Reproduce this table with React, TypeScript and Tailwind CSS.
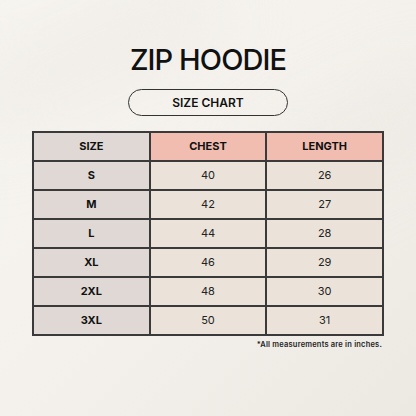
const rows = [
  { size: 'S', chest: 40, length: 26 },
  { size: 'M', chest: 42, length: 27 },
  { size: 'L', chest: 44, length: 28 },
  { size: 'XL', chest: 46, length: 29 },
  { size: '2XL', chest: 48, length: 30 },
  { size: '3XL', chest: 50, length: 31 },
]

export default function App() {
  return (
    <div
      className="relative w-[416px] h-[416px] overflow-hidden bg-gradient-to-br from-[#f7f5f0] via-[#f4f1ec] to-[#ece8e2] text-[#111]"
      style={{ fontFamily: 'Inter, "Liberation Sans", sans-serif' }}
    >
      {/* soft window-light shading */}
      <div className="absolute -left-10 top-6 w-[260px] h-[60px] rotate-[-25deg] bg-[#e9e5df]/60 blur-2xl" />
      <div className="absolute right-[-40px] top-[110px] w-[200px] h-[50px] rotate-[-25deg] bg-[#e6e2dc]/50 blur-2xl" />

      <div className="relative flex flex-col items-center pt-[45px]">
        <h1 className="text-[29px] leading-none font-medium tracking-[-0.9px]">ZIP HOODIE</h1>

        <div className="mt-[15px] w-[160px] h-[27px] rounded-full border border-[#333] flex items-center justify-center">
          <span className="text-[12px] font-semibold">SIZE CHART</span>
        </div>

        <table className="mt-[15px] w-[352px] table-fixed border-collapse text-[11px]">
          <thead>
            <tr className="h-[29px]">
              <th className="border-2 border-[#3a3a3a] bg-[#dfd8d4] font-bold">SIZE</th>
              <th className="border-2 border-[#3a3a3a] bg-[#f0bdb0] font-bold">CHEST</th>
              <th className="border-2 border-[#3a3a3a] bg-[#f0bdb0] font-bold">LENGTH</th>
            </tr>
          </thead>
          <tbody>
            {rows.map((r) => (
              <tr key={r.size} className="h-[29px] text-center">
                <td className="border-2 border-[#3a3a3a] bg-[#dfd8d4] font-bold">{r.size}</td>
                <td className="border-2 border-[#3a3a3a] bg-[#ebe3d9] text-[#222]">{r.chest}</td>
                <td className="border-2 border-[#3a3a3a] bg-[#ebe3d9] text-[#222]">{r.length}</td>
              </tr>
            ))}
          </tbody>
        </table>

        <p className="self-end mr-[34px] mt-[3px] text-[7.5px] font-semibold tracking-[0.2px] text-[#222]">
          *All measurements are in inches.
        </p>
      </div>
    </div>
  )
}
